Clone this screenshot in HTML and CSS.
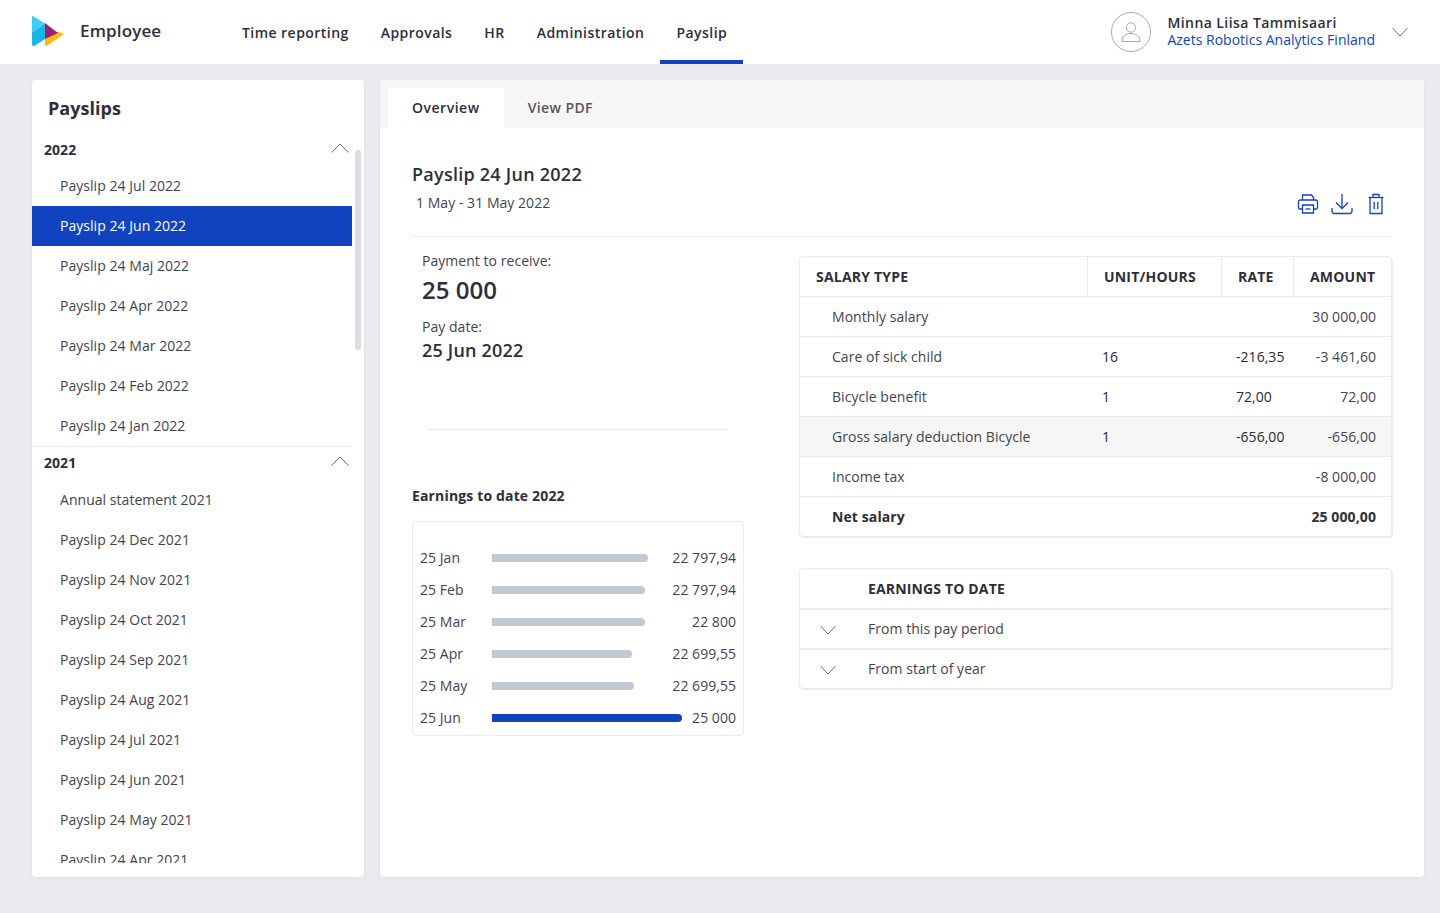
FILE: index.html
```html
<!DOCTYPE html>
<html>
<head>
    <meta charset="utf-8">
    <title>Payslip</title>
    <link rel="stylesheet" href="styles.css">
</head>
<body>
<header class="top-bar">
    <svg class="logo" width="33" height="33" viewBox="0 0 33 33">
        <path d="M0 17.5 L13 8.5 L13 24 L2 31 Q0 31.5 0 29 Z" fill="#16b5e6"/>
        <path d="M0 0.5 L13 8.5 L0 17.5 Z" fill="#3dcdf5"/>
        <path d="M13 24 L26 16.5 L32 19 L14.5 31 Q13 31.5 13 29 Z" fill="#fdb913"/>
        <path d="M13 8 L26 18 L13 24 Z" fill="#9c1f7c"/>
    </svg>
    <div class="app-name">Employee</div>
    <nav class="main-nav">
        <a class="nav-item">Time reporting</a>
        <a class="nav-item">Approvals</a>
        <a class="nav-item">HR</a>
        <a class="nav-item">Administration</a>
        <a class="nav-item nav-item-active">Payslip</a>
    </nav>
    <div class="user-box">
        <svg class="avatar" width="40" height="40" viewBox="0 0 40 40" fill="none" stroke="#a9a9b8">
            <circle cx="20" cy="20" r="19.5"/>
            <circle cx="20" cy="15.5" r="4.7"/>
            <path d="M11 29.5 C11 24 15 21.5 20 21.5 C25 21.5 29 24 29 29.5 Z"/>
        </svg>
        <div class="user-text">
            <div class="user-name">Minna Liisa Tammisaari</div>
            <div class="user-company">Azets Robotics Analytics Finland</div>
        </div>
        <svg class="user-arrow" width="16" height="10" viewBox="0 0 16 10" fill="none" stroke="#6e6e7c"><path d="M0.5 1 L8 9 L15.5 1"/></svg>
    </div>
</header>

<div class="page">
    <aside class="side-card">
        <h2 class="side-title">Payslips</h2>
        <div class="side-list">
            <div class="year-row year-first">
                <span>2022</span>
                <svg width="18" height="10" viewBox="0 0 18 10" fill="none" stroke="#6e6e7c"><path d="M0.5 9.5 L9 1 L17.5 9.5"/></svg>
            </div>
            <a class="slip-item">Payslip 24 Jul 2022</a>
            <a class="slip-item slip-item-active">Payslip 24 Jun 2022</a>
            <a class="slip-item">Payslip 24 Maj 2022</a>
            <a class="slip-item">Payslip 24 Apr 2022</a>
            <a class="slip-item">Payslip 24 Mar 2022</a>
            <a class="slip-item">Payslip 24 Feb 2022</a>
            <a class="slip-item">Payslip 24 Jan 2022</a>
            <div class="year-row year-next">
                <span>2021</span>
                <svg width="18" height="10" viewBox="0 0 18 10" fill="none" stroke="#6e6e7c"><path d="M0.5 9.5 L9 1 L17.5 9.5"/></svg>
            </div>
            <a class="slip-item">Annual statement 2021</a>
            <a class="slip-item">Payslip 24 Dec 2021</a>
            <a class="slip-item">Payslip 24 Nov 2021</a>
            <a class="slip-item">Payslip 24 Oct 2021</a>
            <a class="slip-item">Payslip 24 Sep 2021</a>
            <a class="slip-item">Payslip 24 Aug 2021</a>
            <a class="slip-item">Payslip 24 Jul 2021</a>
            <a class="slip-item">Payslip 24 Jun 2021</a>
            <a class="slip-item">Payslip 24 May 2021</a>
            <a class="slip-item">Payslip 24 Apr 2021</a>
        </div>
        <div class="scroll-thumb"></div>
    </aside>

    <main class="main-card">
        <div class="tabs">
            <a class="tab tab-active">Overview</a>
            <a class="tab">View PDF</a>
        </div>
        <div class="content">
            <div class="slip-head">
                <div>
                    <h1 class="slip-title">Payslip 24 Jun 2022</h1>
                    <div class="slip-period">1 May - 31 May 2022</div>
                </div>
                <div class="slip-actions">
                    <svg width="22" height="22" viewBox="0 0 22 22" fill="none" stroke="#1142bf" stroke-width="1.3">
                        <path d="M5.5 7 V2 H14.5 L16.5 4.5 V7"/>
                        <path d="M5 16 H3 Q1.5 16 1.5 14 V9 Q1.5 7 3 7 H19 Q20.5 7 20.5 9 V14 Q20.5 16 19 16 H17"/>
                        <path d="M5.5 12 H16.5 V20 H5.5 Z"/>
                        <path d="M8.5 16 H13.5"/>
                    </svg>
                    <svg width="22" height="22" viewBox="0 0 22 22" fill="none" stroke="#1142bf" stroke-width="1.3">
                        <path d="M11 1 V15"/>
                        <path d="M5 9.5 L11 15.5 L17 9.5"/>
                        <path d="M1 15 V18 Q1 20.5 3.5 20.5 H18.5 Q21 20.5 21 18 V15"/>
                    </svg>
                    <svg width="22" height="22" viewBox="0 0 22 22" fill="none" stroke="#1142bf" stroke-width="1.3">
                        <path d="M3.5 4.5 H18.5"/>
                        <path d="M8 4 V1.5 H14 V4"/>
                        <path d="M5 4.5 V20.5 H17 V4.5"/>
                        <path d="M9.2 9 V16 M12.8 9 V16"/>
                    </svg>
                </div>
            </div>

            <div class="columns">
                <section class="left-col">
                    <div class="pay-box">
                        <div class="pay-label">Payment to receive:</div>
                        <div class="pay-sum">25 000</div>
                        <div class="pay-label pay-label-date">Pay date:</div>
                        <div class="pay-date">25 Jun 2022</div>
                    </div>
                    <div class="pay-line"></div>
                    <h3 class="chart-title">Earnings to date 2022</h3>
                    <div class="chart-box">
                        <div class="chart-row"><span class="chart-month">25 Jan</span><span class="chart-track"><span class="chart-bar" style="width:156px"></span></span><span class="chart-val">22 797,94</span></div>
                        <div class="chart-row"><span class="chart-month">25 Feb</span><span class="chart-track"><span class="chart-bar" style="width:153px"></span></span><span class="chart-val">22 797,94</span></div>
                        <div class="chart-row"><span class="chart-month">25 Mar</span><span class="chart-track"><span class="chart-bar" style="width:153px"></span></span><span class="chart-val">22 800</span></div>
                        <div class="chart-row"><span class="chart-month">25 Apr</span><span class="chart-track"><span class="chart-bar" style="width:140px"></span></span><span class="chart-val">22 699,55</span></div>
                        <div class="chart-row"><span class="chart-month">25 May</span><span class="chart-track"><span class="chart-bar" style="width:142px"></span></span><span class="chart-val">22 699,55</span></div>
                        <div class="chart-row"><span class="chart-month">25 Jun</span><span class="chart-track"><span class="chart-bar chart-bar-now" style="width:190px"></span></span><span class="chart-val">25 000</span></div>
                    </div>
                </section>

                <section class="right-col">
                    <table class="salary-table">
                        <colgroup>
                            <col class="col-type"><col class="col-unit"><col class="col-rate"><col class="col-amount">
                        </colgroup>
                        <thead>
                            <tr><th>SALARY TYPE</th><th>UNIT/HOURS</th><th>RATE</th><th>AMOUNT</th></tr>
                        </thead>
                        <tbody>
                            <tr><td class="cell-name">Monthly salary</td><td></td><td></td><td class="cell-amount">30 000,00</td></tr>
                            <tr><td class="cell-name">Care of sick child</td><td class="cell-num">16</td><td class="cell-num">-216,35</td><td class="cell-amount">-3 461,60</td></tr>
                            <tr><td class="cell-name">Bicycle benefit</td><td class="cell-num">1</td><td class="cell-num">72,00</td><td class="cell-amount">72,00</td></tr>
                            <tr class="row-hover"><td class="cell-name">Gross salary deduction Bicycle</td><td class="cell-num">1</td><td class="cell-num">-656,00</td><td class="cell-amount">-656,00</td></tr>
                            <tr><td class="cell-name">Income tax</td><td></td><td></td><td class="cell-amount">-8 000,00</td></tr>
                            <tr class="row-total"><td class="cell-name">Net salary</td><td></td><td></td><td class="cell-amount">25 000,00</td></tr>
                        </tbody>
                    </table>

                    <div class="earn-box">
                        <div class="earn-head">EARNINGS TO DATE</div>
                        <div class="earn-row">
                            <svg width="16" height="10" viewBox="0 0 16 10" fill="none" stroke="#6e6e7c"><path d="M0.5 1 L8 9 L15.5 1"/></svg>
                            <span>From this pay period</span>
                        </div>
                        <div class="earn-row">
                            <svg width="16" height="10" viewBox="0 0 16 10" fill="none" stroke="#6e6e7c"><path d="M0.5 1 L8 9 L15.5 1"/></svg>
                            <span>From start of year</span>
                        </div>
                    </div>
                </section>
            </div>
        </div>
    </main>
</div>
</body>
</html>
```

FILE: styles.css
```css
html, body {
    margin: 0;
    height: 100%;
}
body {
    background: #eaeaef;
    color: #2e2e3a;
    font-family: "Open Sans", "Noto Sans", sans-serif;
    font-size: 14px;
    letter-spacing: 0.04px;
    overflow: hidden;
}

/* top bar */
.top-bar {
    height: 64px;
    background: #fff;
    display: flex;
    align-items: center;
    padding-left: 32px;
    box-sizing: border-box;
}
.logo {
    margin-top: -2px;
}
.app-name {
    width: 146px;
    margin-left: 15px;
    margin-top: -4px;
    font-size: 17px;
    font-weight: 600;
    letter-spacing: 0.15px;
}
.main-nav {
    display: flex;
    height: 64px;
}
.nav-item {
    display: flex;
    align-items: center;
    padding: 4px 16px 0;
    box-sizing: border-box;
    font-weight: 600;
    letter-spacing: 0.45px;
    border-bottom: 4px solid transparent;
}
.nav-item-active {
    border-bottom-color: #1142bf;
}
.user-box {
    margin-left: auto;
    display: flex;
    align-items: center;
    padding-right: 32px;
}
.user-text {
    margin-left: 16px;
    margin-top: -2px;
    line-height: 17px;
}
.user-name {
    font-weight: 600;
    letter-spacing: 0.43px;
}
.user-company {
    color: #1142bf;
    letter-spacing: 0.01px;
}
.user-arrow {
    margin-left: 17px;
    margin-top: -1px;
}

/* page */
.page {
    display: flex;
    gap: 16px;
    padding: 16px 16px 0 32px;
    height: 797px;
}
.side-card, .main-card {
    background: #fff;
    border-radius: 4px;
    box-shadow: 0 1px 4px rgba(40, 40, 70, 0.05);
}

/* left list */
.side-card {
    width: 332px;
    position: relative;
    flex-shrink: 0;
}
.side-title {
    margin: 0;
    padding: 14px 0 0 16px;
    font-size: 18px;
    font-weight: 700;
    line-height: 28px;
    height: 36px;
}
.side-list {
    width: 320px;
    height: 733px;
    overflow: hidden;
}
.year-row {
    display: flex;
    justify-content: space-between;
    align-items: center;
    padding: 0 3px 0 12px;
    font-weight: 700;
    box-sizing: border-box;
}
.year-row svg {
    margin-top: -3px;
}
.year-first {
    height: 36px;
    padding-top: 2px;
}
.year-next {
    height: 34px;
    padding-bottom: 2px;
    border-top: 1px solid #eaeaef;
}
.slip-item {
    display: block;
    height: 40px;
    line-height: 40px;
    padding-left: 28px;
    color: #43434f;
}
.slip-item-active {
    background: #1142bf;
    color: #fff;
}
.scroll-thumb {
    position: absolute;
    left: 323px;
    top: 70px;
    width: 6px;
    height: 200px;
    border-radius: 3px;
    background: #dcdce2;
}

/* right card */
.main-card {
    width: 1044px;
    flex-shrink: 0;
}
.tabs {
    height: 48px;
    background: #f6f6f7;
    border-radius: 4px 4px 0 0;
    display: flex;
    padding: 8px 0 0 8px;
    box-sizing: border-box;
}
.tab {
    padding: 0 24px;
    height: 40px;
    line-height: 39px;
    font-weight: 600;
    letter-spacing: 0.4px;
    color: #55555f;
}
.tab-active {
    background: #fff;
    color: #2e2e3a;
    letter-spacing: 0.52px;
}
.content {
    padding: 0 32px;
}
.slip-head {
    height: 109px;
    display: flex;
    justify-content: space-between;
    border-bottom: 1px solid #eaeaef;
    box-sizing: border-box;
}
.slip-title {
    margin: 33px 0 0;
    font-size: 18px;
    font-weight: 600;
    letter-spacing: 0.25px;
    line-height: 26px;
}
.slip-period {
    margin-top: 6px;
    padding-left: 4px;
    line-height: 20px;
    color: #43434f;
}
.slip-actions {
    display: flex;
    gap: 12px;
    padding-top: 65px;
    margin-right: 5px;
}
.columns {
    display: flex;
}

/* left column */
.left-col {
    width: 332px;
    margin-right: 55px;
    flex-shrink: 0;
}
.pay-box {
    padding: 14px 0 0 10px;
    height: 178px;
    box-sizing: border-box;
}
.pay-label {
    line-height: 20px;
    color: #43434f;
}
.pay-sum {
    margin-top: 2px;
    font-size: 24px;
    font-weight: 600;
    line-height: 34px;
}
.pay-label-date {
    margin-top: 10px;
}
.pay-date {
    margin-top: 0;
    font-size: 18px;
    font-weight: 600;
    letter-spacing: 0.2px;
    line-height: 26px;
}
.pay-line {
    margin: 14px 16px 0;
    border-top: 1px solid #eaeaef;
}
.chart-title {
    margin: 56px 0 0;
    font-size: 14px;
    font-weight: 700;
    letter-spacing: 0.15px;
    line-height: 20px;
}
.chart-box {
    margin-top: 15px;
    height: 215px;
    box-sizing: border-box;
    padding: 19px 7px 0;
    border: 1px solid #eaeaef;
    border-radius: 4px;
}
.chart-row {
    display: flex;
    align-items: center;
    height: 32px;
    color: #43434f;
}
.chart-month {
    width: 72px;
    flex-shrink: 0;
}
.chart-track {
    flex: 1;
}
.chart-bar {
    display: block;
    height: 8px;
    margin-top: 1px;
    border-radius: 0 4px 4px 0;
    background: #c4c8d4;
}
.chart-bar-now {
    background: #1142bf;
}
.chart-val {
    flex-shrink: 0;
    text-align: right;
}

/* right column */
.right-col {
    width: 593px;
    padding-top: 19px;
}
.salary-table {
    width: 593px;
    table-layout: fixed;
    border-collapse: separate;
    border-spacing: 0;
    border: 1px solid #eaeaef;
    border-radius: 4px;
    box-shadow: 1px 1px 1px #eaeaef;
}
.col-type { width: 287px; }
.col-unit { width: 134px; }
.col-rate { width: 72px; }
.salary-table th {
    height: 39px;
    padding: 0 0 0 16px;
    text-align: left;
    font-weight: 700;
    letter-spacing: 0.2px;
    border-left: 1px solid #eaeaef;
    border-bottom: 1px solid #eaeaef;
}
.salary-table th:first-child {
    border-left: 0;
}
.salary-table td {
    height: 39px;
    padding: 0;
    border-bottom: 1px solid #eaeaef;
}
.salary-table tr:last-child td {
    border-bottom: 0;
}
.cell-name {
    padding-left: 32px !important;
    color: #43434f;
}
.cell-num {
    padding-left: 15px !important;
    color: #2a2a33;
    white-space: nowrap;
}
.cell-amount {
    padding-right: 15px !important;
    text-align: right;
    color: #43434f;
    white-space: nowrap;
}
.row-hover td {
    background: #f6f6f7;
}
.row-total td {
    font-weight: 700;
    letter-spacing: 0.1px;
    color: #2e2e3a;
}
.earn-box {
    margin-top: 31px;
    border: 1px solid #eaeaef;
    border-radius: 4px;
    box-shadow: 1px 1px 1px #eaeaef;
}
.earn-head {
    height: 39px;
    line-height: 40px;
    padding-left: 68px;
    font-weight: 700;
    letter-spacing: 0.15px;
    border-bottom: 2px solid #eaeaef;
}
.earn-row {
    height: 36px;
    padding-bottom: 2px;
    display: flex;
    align-items: center;
    color: #43434f;
    border-bottom: 2px solid #eaeaef;
}
.earn-row:last-child {
    border-bottom: 0;
}
.earn-row svg {
    margin: 4px 32px 0 20px;
}
```
